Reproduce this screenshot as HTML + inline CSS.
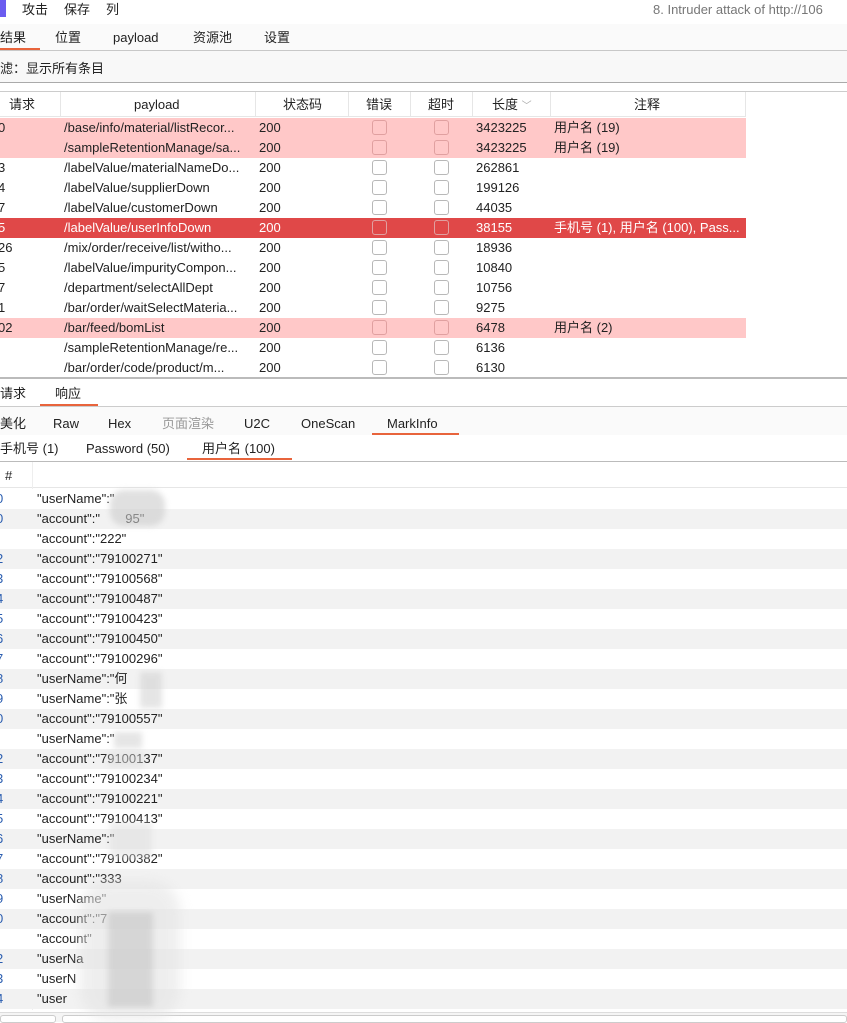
<!DOCTYPE html>
<html><head><meta charset="utf-8"><style>
*{margin:0;padding:0;box-sizing:border-box}
body{width:847px;height:1022px;overflow:hidden;background:#fff;font-family:"Liberation Sans","Noto Sans CJK SC",sans-serif;font-size:13px;color:#222;position:relative}
.a{position:absolute;white-space:nowrap;line-height:17px}
.row{position:absolute;left:0;width:746px;height:20px;line-height:20px}
.cb{position:absolute;width:15px;height:15px;border:1px solid #b8b8b8;border-radius:3px;top:2px;background:transparent}
.c{position:absolute;top:0}
.br{position:absolute;left:0;width:847px;height:20px;line-height:20px}
.tab{position:absolute;height:2px;background:#e8643c}
</style></head><body>
<div class="a" style="left:0;top:0;width:6px;height:17px;background:#6b5cf0"></div>
<div class="a" style="left:22px;top:1px">攻击</div>
<div class="a" style="left:64px;top:1px">保存</div>
<div class="a" style="left:106px;top:1px">列</div>
<div class="a" style="left:653px;top:1px;color:#777">8. Intruder attack of http://106</div>
<div class="a" style="left:0;top:24px;width:847px;height:27px;background:#fafafa"></div>
<div class="a" style="left:0;top:29px">结果</div>
<div class="a" style="left:55px;top:29px">位置</div>
<div class="a" style="left:113px;top:29px">payload</div>
<div class="a" style="left:193px;top:29px">资源池</div>
<div class="a" style="left:264px;top:29px">设置</div>
<div class="tab" style="left:0;top:48px;width:40px"></div>
<div class="a" style="left:0;top:50px;width:847px;height:1px;background:#c8c8c8"></div>
<div class="a" style="left:0;top:51px;width:847px;height:31px;background:#f8f8f8"></div>
<div class="a" style="left:0;top:60px">滤：显示所有条目</div>
<div class="a" style="left:0;top:82px;width:847px;height:1px;background:#aaa"></div>
<div class="a" style="left:0;top:91px;width:847px;height:1px;background:#ccc"></div>
<div class="a" style="left:0;top:92px;width:746px;height:25px;border-bottom:1px solid #e6e6e6"></div>
<div class="a" style="left:9px;top:96px">请求</div>
<div class="a" style="left:60px;top:92px;width:1px;height:25px;background:#e6e6e6"></div>
<div class="a" style="left:134px;top:96px">payload</div>
<div class="a" style="left:255px;top:92px;width:1px;height:25px;background:#e6e6e6"></div>
<div class="a" style="left:283px;top:96px">状态码</div>
<div class="a" style="left:348px;top:92px;width:1px;height:25px;background:#e6e6e6"></div>
<div class="a" style="left:366px;top:96px">错误</div>
<div class="a" style="left:410px;top:92px;width:1px;height:25px;background:#e6e6e6"></div>
<div class="a" style="left:428px;top:96px">超时</div>
<div class="a" style="left:472px;top:92px;width:1px;height:25px;background:#e6e6e6"></div>
<div class="a" style="left:492px;top:96px">长度 <span style="color:#aaa;font-size:10px">﹀</span></div>
<div class="a" style="left:550px;top:92px;width:1px;height:25px;background:#e6e6e6"></div>
<div class="a" style="left:634px;top:96px">注释</div>
<div class="a" style="left:745px;top:92px;width:1px;height:25px;background:#e6e6e6"></div>

<div id="t"></div>
<div class="a" style="left:0;top:377px;width:847px;height:2px;background:#bbb"></div>
<div class="a" style="left:0;top:385px">请求</div>
<div class="a" style="left:55px;top:385px">响应</div>
<div class="tab" style="left:40px;top:404px;width:58px"></div>
<div class="a" style="left:0;top:406px;width:847px;height:1px;background:#ccc"></div>
<div class="a" style="left:0;top:407px;width:847px;height:28px;background:#fafafa"></div>
<div class="a" style="left:0;top:415px">美化</div>
<div class="a" style="left:53px;top:415px">Raw</div>
<div class="a" style="left:108px;top:415px">Hex</div>
<div class="a" style="left:162px;top:415px;color:#999">页面渲染</div>
<div class="a" style="left:244px;top:415px">U2C</div>
<div class="a" style="left:301px;top:415px">OneScan</div>
<div class="a" style="left:387px;top:415px">MarkInfo</div>
<div class="tab" style="left:372px;top:433px;width:87px"></div>
<div class="a" style="left:0;top:440px">手机号 (1)</div>
<div class="a" style="left:86px;top:440px">Password (50)</div>
<div class="a" style="left:202px;top:440px">用户名 (100)</div>
<div class="tab" style="left:187px;top:458px;width:105px"></div>
<div class="a" style="left:0;top:461px;width:847px;height:1px;background:#bbb"></div>
<div class="a" style="left:0;top:462px;width:847px;height:26px;border-bottom:1px solid #e6e6e6"></div>
<div class="a" style="left:5px;top:467px">#</div>
<div class="a" style="left:32px;top:462px;width:1px;height:548px;background:#eee"></div>
<div id="b"></div>
<div class="a" style="left:0;top:1012px;width:847px;height:10px;background:#f5f5f5;border-top:1px solid #ddd"></div>
<div class="a" style="left:0;top:1015px;width:56px;height:8px;border:1px solid #ccc;border-radius:3px;background:#fff"></div>
<div class="a" style="left:62px;top:1015px;width:785px;height:8px;border:1px solid #ccc;border-radius:3px;background:#fff"></div>
<div class="a" style="left:110px;top:490px;width:55px;height:36px;background:#ccc;filter:blur(3px);opacity:.6;border-radius:14px"></div>
<div class="a" style="left:140px;top:672px;width:22px;height:36px;background:#ccc;filter:blur(3px);opacity:.5"></div>
<div class="a" style="left:114px;top:732px;width:28px;height:16px;background:#ccc;filter:blur(3px);opacity:.5"></div>
<div class="a" style="left:108px;top:752px;width:36px;height:16px;background:#ddd;filter:blur(3px);opacity:.5"></div>
<div class="a" style="left:110px;top:822px;width:42px;height:36px;background:#ddd;filter:blur(3px);opacity:.5"></div>
<div class="a" style="left:80px;top:880px;width:100px;height:140px;background:#e4e4e4;filter:blur(6px);opacity:.6;border-radius:30px"></div>
<div class="a" style="left:108px;top:912px;width:45px;height:95px;background:#bbb;filter:blur(3px);opacity:.45"></div>
<script>
var rows=[["0","/base/info/material/listRecor...","3423225","用户名 (19)","p"],
["","/sampleRetentionManage/sa...","3423225","用户名 (19)","p"],
["3","/labelValue/materialNameDo...","262861","",""],
["4","/labelValue/supplierDown","199126","",""],
["7","/labelValue/customerDown","44035","",""],
["5","/labelValue/userInfoDown","38155","手机号 (1), 用户名 (100), Pass...","r"],
["26","/mix/order/receive/list/witho...","18936","",""],
["5","/labelValue/impurityCompon...","10840","",""],
["7","/department/selectAllDept","10756","",""],
["1","/bar/order/waitSelectMateria...","9275","",""],
["02","/bar/feed/bomList","6478","用户名 (2)","p"],
["","/sampleRetentionManage/re...","6136","",""],
["","/bar/order/code/product/m...","6130","",""]];
var h="";
rows.forEach(function(r,i){var y=118+i*20;var bg=r[4]=="p"?"#ffc8c8":r[4]=="r"?"#e04848":"#fff";var col=r[4]=="r"?"#fff":"#222";
h+='<div class="row" style="top:'+y+'px;background:'+bg+';color:'+col+'"><span class="c" style="left:-2px">'+r[0]+'</span><span class="c" style="left:64px">'+r[1]+'</span><span class="c" style="left:259px">200</span><span class="cb" style="left:372px;border-color:'+(r[4]?"#e0a0a0":"#b8b8b8")+'"></span><span class="cb" style="left:434px;border-color:'+(r[4]?"#e0a0a0":"#b8b8b8")+'"></span><span class="c" style="left:476px">'+r[2]+'</span><span class="c" style="left:554px">'+r[3]+'</span></div>';});
h+='<div class="a" style="left:0;top:375px;width:746px;height:2px;background:#fff"></div>';
document.getElementById("t").innerHTML=h;
var b=['"userName":"','"account":"       95"','"account":"222"','"account":"79100271"','"account":"79100568"','"account":"79100487"','"account":"79100423"','"account":"79100450"','"account":"79100296"','"userName":"何','"userName":"张','"account":"79100557"','"userName":"','"account":"79100137"','"account":"79100234"','"account":"79100221"','"account":"79100413"','"userName":"','"account":"79100382"','"account":"333','"userName"','"account":"7','"account"','"userNa','"userN','"user'];
var n=["0","0","","2","3","4","5","6","7","8","9","0","","2","3","4","5","6","7","8","9","0","","2","3","4"];
var g="";
b.forEach(function(t,i){var y=489+i*20;g+='<div class="br" style="top:'+y+'px;background:'+(i%2?"#f2f2f2":"#fff")+'"><span class="c" style="left:-4px;color:#2a5db0">'+n[i]+'</span><span class="c" style="left:37px">'+t.replace(/ /g,"&nbsp;")+'</span></div>';});
document.getElementById("b").innerHTML=g;
</script>
</body></html>
